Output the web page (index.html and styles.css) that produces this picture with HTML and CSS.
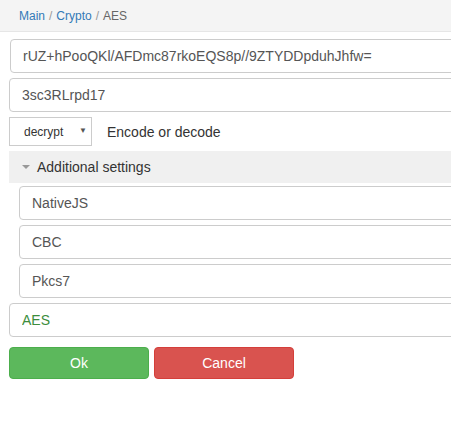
FILE: index.html
```html
<!DOCTYPE html>
<html>
<head>
<meta charset="utf-8">
<link rel="stylesheet" href="styles.css">
</head>
<body>
<nav class="crumbs">
  <a href="#">Main</a><span class="sep">/</span><a href="#">Crypto</a><span class="sep">/</span><span class="current">AES</span>
</nav>
<form class="form">
  <input class="field" type="text" value="rUZ+hPooQKl/AFDmc87rkoEQS8p//9ZTYDDpduhJhfw=">
  <input class="field" type="text" value="3sc3RLrpd17">
  <div class="mode-row">
    <div class="select">
      <span class="select-text">decrypt</span>
      <span class="select-arrow">▼</span>
    </div>
    <span class="mode-label">Encode or decode</span>
  </div>
  <div class="settings-bar"><span class="tri"></span>Additional settings</div>
  <div class="settings">
    <input class="field" type="text" value="NativeJS">
    <input class="field" type="text" value="CBC">
    <input class="field" type="text" value="Pkcs7">
  </div>
  <input class="field ok-field" type="text" value="AES">
  <div class="buttons">
    <button type="button" class="btn btn-ok">Ok</button>
    <button type="button" class="btn btn-cancel">Cancel</button>
  </div>
</form>
</body>
</html>
```
FILE: styles.css
```css
html, body {
  margin: 0;
  padding: 0;
  overflow: hidden;
  background: #fff;
  font-family: "Liberation Sans", Arial, sans-serif;
}
.crumbs {
  height: 32px;
  box-sizing: border-box;
  padding: 8px 19px 0;
  background: #f4f4f4;
  border-bottom: 1px solid #e6e6e6;
  font-size: 12px;
  line-height: 16px;
  color: #666;
}
.crumbs a {
  color: #337ab7;
  text-decoration: none;
}
.sep {
  color: #999;
  padding: 0 4px;
}
.form {
  display: flex;
  flex-direction: column;
  gap: 5px;
  padding: 7px 0 0 9px;
  width: 470px;
}
.field {
  box-sizing: border-box;
  width: 100%;
  height: 34px;
  margin: 0;
  padding: 0 12px;
  border: 1px solid #ccc;
  border-radius: 4px;
  font-family: "Liberation Sans", Arial, sans-serif;
  font-size: 14px;
  color: #555;
  background: #fff;
}
.form > .field:first-child {
  margin-left: 1px;
  width: calc(100% - 1px);
}
.mode-row {
  display: flex;
  align-items: center;
  gap: 15px;
}
.select {
  box-sizing: border-box;
  width: 83px;
  height: 29px;
  border: 1px solid #ccc;
  display: flex;
  align-items: center;
  padding-left: 14px;
  font-size: 12px;
  color: #333;
  position: relative;
}
.select-arrow {
  position: absolute;
  left: 69px;
  top: 8px;
  font-size: 8px;
  color: #555;
}
.mode-label {
  font-size: 14px;
  color: #333;
}
.settings-bar {
  height: 32px;
  box-sizing: border-box;
  background: #f0f0f0;
  display: flex;
  align-items: center;
  padding-left: 13px;
  font-size: 14px;
  color: #333;
  margin-bottom: -2px;
}
.tri {
  width: 0;
  height: 0;
  border-left: 4px solid transparent;
  border-right: 4px solid transparent;
  border-top: 4px solid #999;
  margin-right: 7px;
}
.settings {
  display: flex;
  flex-direction: column;
  gap: 5px;
  padding-left: 10px;
}
.ok-field {
  color: #3c8d3c;
}
.buttons {
  display: flex;
  gap: 5px;
  margin-top: 5px;
}
.btn {
  width: 140px;
  height: 32px;
  border: 1px solid transparent;
  border-radius: 4px;
  color: #fff;
  font-family: "Liberation Sans", Arial, sans-serif;
  font-size: 14px;
  padding: 0;
}
.btn-ok {
  background: #5cb85c;
  border-color: #4cae4c;
}
.btn-cancel {
  background: #d9534f;
  border-color: #d43f3a;
}
```
